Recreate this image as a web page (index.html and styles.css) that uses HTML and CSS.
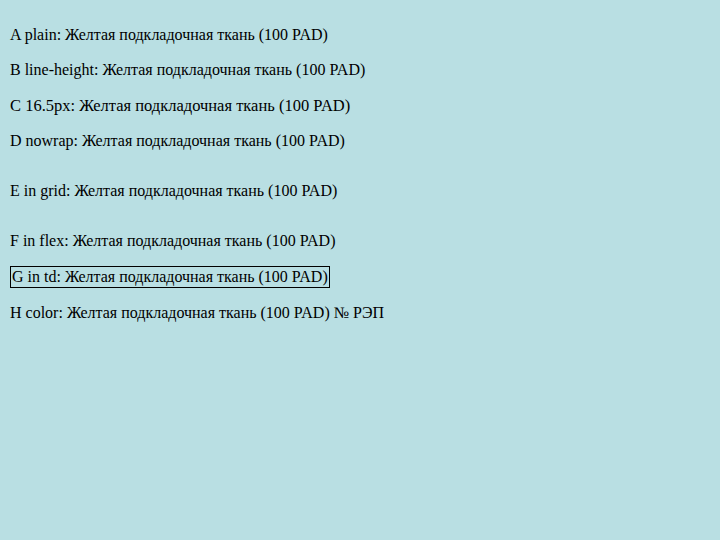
FILE: index.html
```html
<!DOCTYPE html>
<html>
<head>
<meta charset="utf-8">
<link rel="stylesheet" href="styles.css">
</head>
<body>
<p class="a">A plain: Желтая подкладочная ткань (100 PAD)</p>
<p class="b">B line-height: Желтая подкладочная ткань (100 PAD)</p>
<p class="c">C 16.5px: Желтая подкладочная ткань (100 PAD)</p>
<p class="d">D nowrap: Желтая подкладочная ткань (100 PAD)</p>
<div class="g"><p class="a">E in grid: Желтая подкладочная ткань (100 PAD)</p></div>
<div class="f"><p class="a">F in flex: Желтая подкладочная ткань (100 PAD)</p></div>
<table class="t"><tr><td class="a">G in td: Желтая подкладочная ткань (100 PAD)</td></tr></table>
<p class="h">H color: Желтая подкладочная ткань (100 PAD) № РЭП</p>
</body>
</html>
```

FILE: styles.css
```css
html { background: #b9dfe3; }
body { margin: 0; padding: 10px; }
.a { font-family: "Liberation Serif", serif; font-size: 16px; }
.b { font-family: "Liberation Serif", serif; font-size: 16px; line-height: 19.4px; }
.c { font-family: "Liberation Serif", serif; font-size: 16.5px; }
.d { font-family: "Liberation Serif", serif; font-size: 16px; white-space: nowrap; }
.g { display: grid; grid-template-columns: 400px; }
.f { display: flex; }
.t { border-collapse: collapse; }
.t td { border: 1px solid #000; }
.h { font-family: "Liberation Serif", serif; font-size: 16px; color: #000; }
```
